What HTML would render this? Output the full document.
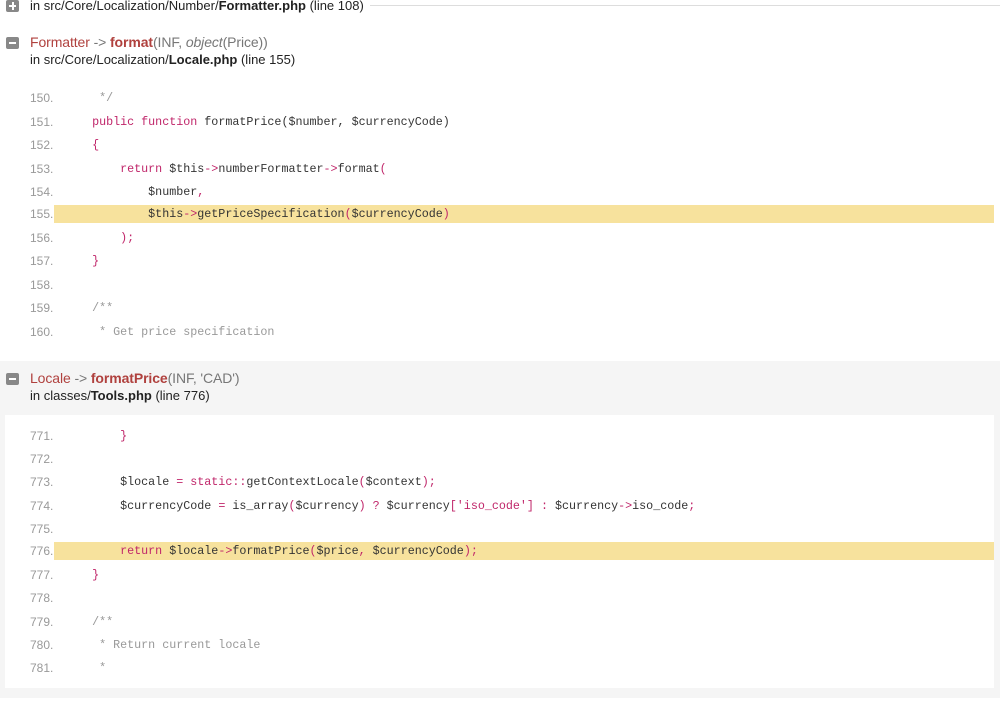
<!DOCTYPE html>
<html><head><meta charset="utf-8"><style>
*{margin:0;padding:0;box-sizing:border-box}
body{width:1000px;height:710px;overflow:hidden;background:#fff;font-family:"Liberation Sans",Arial,sans-serif;position:relative}
.ab{position:absolute}
.icon{position:absolute;width:13px;height:12px;background:#888;border-radius:2px}
.icon:after{content:"";position:absolute;left:3px;right:3px;top:5px;height:2px;background:#fff}
.icon.plus:before{content:"";position:absolute;top:2px;bottom:2px;left:5.5px;width:2px;background:#fff}
.h1{font-size:14px;color:#777;white-space:nowrap;letter-spacing:-0.1px}
.cls{color:#b0413e}
.fn{color:#b0413e;font-weight:bold}
.h2{font-size:13px;color:#222;white-space:nowrap}
.h2 b{font-weight:bold}
.ln{position:absolute;left:30px;font-size:12px;color:#999;width:40px}
.code{position:absolute;left:64px;font-family:"Liberation Mono",monospace;font-size:11.7px;color:#333;white-space:pre}
.k{color:#c0266a}
.c{color:#999}
.hl{position:absolute;left:54px;width:940px;height:18px;background:#f7e29d}
</style></head><body>
<div class="ab" style="left:0;top:5px;width:1000px;height:1px;background:#ddd"></div>
<div class="ab" style="left:0;top:0;width:370px;height:14px;background:#fff"></div>
<div class="icon plus" style="left:6px;top:0px"></div>
<div class="ab h2" style="left:30px;top:-2px;background:#fff">in src/Core/Localization/Number/<b>Formatter.php</b> (line 108)</div>

<div class="icon" style="left:6px;top:37px"></div>
<div class="ab h1" style="left:30px;top:34px"><span class="cls">Formatter</span> -&gt; <span class="fn">format</span>(INF, <i>object</i>(Price))</div>
<div class="ab h2" style="left:30px;top:52px">in src/Core/Localization/<b>Locale.php</b> (line 155)</div>

<div class="hl" style="top:205px"></div>

<div class="ab" style="left:0;top:361px;width:1000px;height:337px;background:#f5f5f5"></div>
<div class="ab" style="left:5px;top:415px;width:989px;height:273px;background:#fff"></div>
<div class="icon" style="left:6px;top:373px"></div>
<div class="ab h1" style="left:30px;top:370px"><span class="cls">Locale</span> -&gt; <span class="fn">formatPrice</span>(INF, 'CAD')</div>
<div class="ab h2" style="left:30px;top:388px">in classes/<b>Tools.php</b> (line 776)</div>
<div class="hl" style="top:542px"></div>

<div class="ln" style="top:91px">150.</div><div class="code" style="top:91px"><span class="c">     */</span></div>
<div class="ln" style="top:115px">151.</div><div class="code" style="top:115px">    <span class="k">public function</span> formatPrice($number, $currencyCode)</div>
<div class="ln" style="top:138px">152.</div><div class="code" style="top:138px">    <span class="k">{</span></div>
<div class="ln" style="top:162px">153.</div><div class="code" style="top:162px">        <span class="k">return</span> $this<span class="k">-&gt;</span>numberFormatter<span class="k">-&gt;</span>format<span class="k">(</span></div>
<div class="ln" style="top:185px">154.</div><div class="code" style="top:185px">            $number<span class="k">,</span></div>
<div class="ln" style="top:207px">155.</div><div class="code" style="top:207px">            $this<span class="k">-&gt;</span>getPriceSpecification<span class="k">(</span>$currencyCode<span class="k">)</span></div>
<div class="ln" style="top:231px">156.</div><div class="code" style="top:231px">        <span class="k">);</span></div>
<div class="ln" style="top:254px">157.</div><div class="code" style="top:254px">    <span class="k">}</span></div>
<div class="ln" style="top:278px">158.</div>
<div class="ln" style="top:301px">159.</div><div class="code" style="top:301px">    <span class="c">/**</span></div>
<div class="ln" style="top:325px">160.</div><div class="code" style="top:325px"><span class="c">     * Get price specification</span></div>

<div class="ln" style="top:429px">771.</div><div class="code" style="top:429px">        <span class="k">}</span></div>
<div class="ln" style="top:452px">772.</div>
<div class="ln" style="top:475px">773.</div><div class="code" style="top:475px">        $locale <span class="k">=</span> <span class="k">static::</span>getContextLocale<span class="k">(</span>$context<span class="k">);</span></div>
<div class="ln" style="top:499px">774.</div><div class="code" style="top:499px">        $currencyCode <span class="k">=</span> is_array<span class="k">(</span>$currency<span class="k">) ?</span> $currency<span class="k">['iso_code'] :</span> $currency<span class="k">-&gt;</span>iso_code<span class="k">;</span></div>
<div class="ln" style="top:522px">775.</div>
<div class="ln" style="top:544px">776.</div><div class="code" style="top:544px">        <span class="k">return</span> $locale<span class="k">-&gt;</span>formatPrice<span class="k">(</span>$price<span class="k">,</span> $currencyCode<span class="k">);</span></div>
<div class="ln" style="top:568px">777.</div><div class="code" style="top:568px">    <span class="k">}</span></div>
<div class="ln" style="top:591px">778.</div>
<div class="ln" style="top:615px">779.</div><div class="code" style="top:615px">    <span class="c">/**</span></div>
<div class="ln" style="top:638px">780.</div><div class="code" style="top:638px"><span class="c">     * Return current locale</span></div>
<div class="ln" style="top:661px">781.</div><div class="code" style="top:661px"><span class="c">     *</span></div>
</body></html>
